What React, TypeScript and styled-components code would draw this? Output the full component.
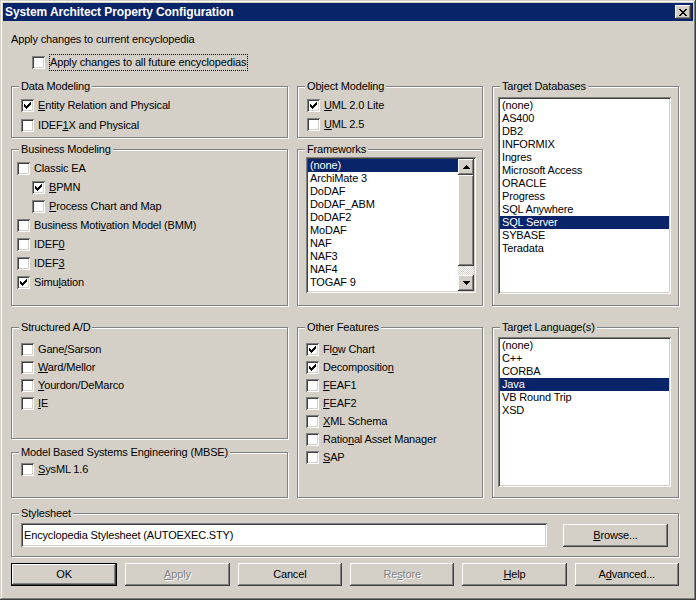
import React from "react";
import styled, { createGlobalStyle, css } from "styled-components";

const face = "#d4d0c8";
const shadow = "#808080";
const darkShadow = "#404040";
const selection = "#0a246a";

const GlobalStyle = createGlobalStyle`
  html, body {
    margin: 0;
    padding: 0;
    background: ${face};
  }
  body {
    font-family: "Liberation Sans", Arial, sans-serif;
    font-size: 11px;
    letter-spacing: -0.15px;
    color: #000;
  }
  * {
    box-sizing: border-box;
  }
`;

const raised = css`
  box-shadow: inset -1px -1px ${darkShadow}, inset 1px 1px #fff,
    inset -2px -2px ${shadow}, inset 2px 2px ${face};
`;

const sunken = css`
  box-shadow: inset 1px 1px ${shadow}, inset -1px -1px #fff,
    inset 2px 2px ${darkShadow}, inset -2px -2px ${face};
`;

const Window = styled.div`
  width: 696px;
  height: 600px;
  padding: 3px;
  background: ${face};
  box-shadow: inset -1px -1px ${darkShadow}, inset 1px 1px ${face},
    inset -2px -2px ${shadow}, inset 2px 2px #fff;
  display: flex;
  flex-direction: column;
`;

const TitleBar = styled.div`
  height: 18px;
  background: ${selection};
  display: flex;
  align-items: center;
  justify-content: space-between;
  padding: 0 2px;
`;

const TitleText = styled.span`
  color: #fff;
  font-weight: bold;
  font-size: 12px;
  letter-spacing: -0.1px;
  line-height: 14px;
  white-space: nowrap;
`;

const CloseButton = styled.div`
  width: 16px;
  height: 14px;
  background: ${face};
  ${raised};
  display: flex;
  align-items: center;
  justify-content: center;
`;

const Body = styled.div`
  padding-left: 8px;
  display: flex;
  flex-direction: column;
`;

const Intro = styled.div`
  margin-top: 12px;
  line-height: 13px;
  white-space: nowrap;
`;

const FutureRow = styled.div`
  margin-top: 8px;
  height: 17px;
  padding-left: 21px;
  display: flex;
  align-items: center;
  gap: 4px;
`;

const FocusLabel = styled.span`
  border: 1px dotted #000;
  line-height: 13px;
  padding: 1px 1px 1px 0;
  white-space: nowrap;
`;

const UpperGrid = styled.div`
  margin-top: 15px;
  display: grid;
  grid-template-columns: 277px 186px 187px;
  grid-template-rows: 52px 157px;
  column-gap: 9px;
  row-gap: 11px;
  grid-template-areas:
    "data obj db"
    "bus fw db";
`;

const LowerGrid = styled.div`
  margin-top: 21px;
  display: grid;
  grid-template-columns: 277px 186px 187px;
  grid-template-rows: 112px 46px;
  column-gap: 9px;
  row-gap: 13px;
  grid-template-areas:
    "sad other lang"
    "mbse other lang";
`;

const Group = styled.div<{ $area?: string; $pad: string }>`
  grid-area: ${(p) => p.$area ?? "auto"};
  position: relative;
  border: 1px solid ${shadow};
  box-shadow: 1px 1px 0 #fff, inset 1px 1px 0 #fff;
  padding: ${(p) => p.$pad};
  display: flex;
  flex-direction: column;
`;

const Caption = styled.span`
  position: absolute;
  top: -7px;
  left: 7px;
  padding: 0 2px;
  line-height: 13px;
  background: ${face};
  white-space: nowrap;
`;

const CheckRow = styled.div<{ $h: number; $indent?: number }>`
  height: ${(p) => p.$h}px;
  padding-left: ${(p) => p.$indent ?? 0}px;
  display: flex;
  align-items: center;
  gap: 4px;
  flex: none;
`;

const Box = styled.span`
  width: 13px;
  height: 13px;
  flex: none;
  background: #fff;
  ${sunken};
  display: flex;
  align-items: center;
  justify-content: center;
`;

const LabelText = styled.span<{ $disabled?: boolean }>`
  line-height: 13px;
  white-space: nowrap;
  ${(p) =>
    p.$disabled &&
    css`
      color: ${shadow};
      text-shadow: 1px 1px 0 #fff;
    `}
`;

const Key = styled.u`
  text-decoration: underline;
  text-underline-offset: 1px;
`;

const ListBox = styled.div`
  flex: 1;
  background: #fff;
  ${sunken};
  padding: 2px;
  display: flex;
  overflow: hidden;
`;

const ListItems = styled.div`
  flex: 1;
  overflow: hidden;
`;

const ListItem = styled.div<{ $selected?: boolean }>`
  height: 13px;
  line-height: 13px;
  padding-left: 2px;
  white-space: nowrap;
  background: ${(p) => (p.$selected ? selection : "transparent")};
  color: ${(p) => (p.$selected ? "#fff" : "#000")};
`;

const ScrollBar = styled.div`
  width: 16px;
  flex: none;
  display: flex;
  flex-direction: column;
`;

const ScrollButton = styled.div`
  height: 16px;
  flex: none;
  background: ${face};
  ${raised};
  display: flex;
  align-items: center;
  justify-content: center;
`;

const Thumb = styled.div`
  height: 91px;
  flex: none;
  background: ${face};
  ${raised};
`;

const Track = styled.div`
  flex: 1;
  background: repeating-conic-gradient(#fff 0 25%, ${face} 0 50%) 0 0 / 2px
    2px;
`;

const StyleGroup = styled(Group)`
  margin-top: 15px;
  width: 668px;
  height: 44px;
  flex-direction: row;
  align-items: center;
  gap: 16px;
`;

const TextField = styled.div`
  width: 526px;
  height: 24px;
  background: #fff;
  ${sunken};
  padding: 0 3px;
  display: flex;
  align-items: center;
  white-space: nowrap;
`;

const Button = styled.div<{ $default?: boolean; $width?: number }>`
  height: 23px;
  flex: ${(p) => (p.$width ? "none" : "1")};
  width: ${(p) => (p.$width ? `${p.$width}px` : "auto")};
  background: ${face};
  ${raised};
  display: flex;
  align-items: center;
  justify-content: center;
  line-height: 13px;
  white-space: nowrap;
  ${(p) =>
    p.$default &&
    css`
      border: 1px solid #000;
    `}
`;

const ButtonRow = styled.div`
  margin-top: 6px;
  width: 668px;
  display: flex;
  gap: 8px;
`;

// "&" marks the mnemonic letter, as in a Windows resource file
const Mnemonic = ({ text }: { text: string }) => {
  const i = text.indexOf("&");
  if (i < 0) return <>{text}</>;
  return (
    <>
      {text.slice(0, i)}
      <Key>{text[i + 1]}</Key>
      {text.slice(i + 2)}
    </>
  );
};

const CheckMark = () => (
  <svg width="7" height="7" viewBox="0 0 7 7" shapeRendering="crispEdges">
    <path
      d="M6 0h1v1h-1z M5 1h2v1h-2z M0 2h1v1h-1z M4 2h3v1h-3z M0 3h2v1h-2z M3 3h3v1h-3z M0 4h5v1h-5z M1 5h3v1h-3z M2 6h1v1h-1z"
      fill="#000"
    />
  </svg>
);

const Arrow = ({ down }: { down?: boolean }) => (
  <svg
    width="7"
    height="4"
    viewBox="0 0 7 4"
    shapeRendering="crispEdges"
    style={down ? { transform: "scaleY(-1)" } : undefined}
  >
    <path d="M3 0h1v1h1v1h1v1h1v1h-7v-1h1v-1h1v-1h1z" fill="#000" />
  </svg>
);

const CloseGlyph = () => (
  <svg width="8" height="7" viewBox="0 0 8 7" shapeRendering="crispEdges">
    <path
      d="M0 0h2v1h-2z M6 0h2v1h-2z M1 1h2v1h-2z M5 1h2v1h-2z M2 2h4v1h-4z M3 3h2v1h-2z M2 4h4v1h-4z M1 5h2v1h-2z M5 5h2v1h-2z M0 6h2v1h-2z M6 6h2v1h-2z"
      fill="#000"
    />
  </svg>
);

type Option = { label: string; checked?: boolean; indent?: number };

const Check = ({ label, checked, indent, h }: Option & { h: number }) => (
  <CheckRow $h={h} $indent={indent}>
    <Box>{checked && <CheckMark />}</Box>
    <LabelText>
      <Mnemonic text={label} />
    </LabelText>
  </CheckRow>
);

const dataModeling: Option[] = [
  { label: "&Entity Relation and Physical", checked: true },
  { label: "IDEF&1X and Physical" },
];

const objectModeling: Option[] = [
  { label: "&UML 2.0 Lite", checked: true },
  { label: "&UML 2.5" },
];

const businessModeling: Option[] = [
  { label: "Classic EA" },
  { label: "&BPMN", checked: true, indent: 15 },
  { label: "&Process Chart and Map", indent: 15 },
  { label: "Business Moti&vation Model (BMM)" },
  { label: "IDEF&0" },
  { label: "IDEF&3" },
  { label: "Simu&lation", checked: true },
];

const structured: Option[] = [
  { label: "Gane&/Sarson" },
  { label: "&Ward/Mellor" },
  { label: "&Yourdon/DeMarco" },
  { label: "&IE" },
];

const otherFeatures: Option[] = [
  { label: "Fl&ow Chart", checked: true },
  { label: "Decompositio&n", checked: true },
  { label: "&FEAF1" },
  { label: "&FEAF2" },
  { label: "&XML Schema" },
  { label: "Ratio&nal Asset Manager" },
  { label: "&SAP" },
];

const frameworks = [
  "(none)",
  "ArchiMate 3",
  "DoDAF",
  "DoDAF_ABM",
  "DoDAF2",
  "MoDAF",
  "NAF",
  "NAF3",
  "NAF4",
  "TOGAF 9",
  "UAF",
];

const databases = [
  "(none)",
  "AS400",
  "DB2",
  "INFORMIX",
  "Ingres",
  "Microsoft Access",
  "ORACLE",
  "Progress",
  "SQL Anywhere",
  "SQL Server",
  "SYBASE",
  "Teradata",
];

const languages = ["(none)", "C++", "CORBA", "Java", "VB Round Trip", "XSD"];

const buttons = [
  { label: "OK", isDefault: true },
  { label: "&Apply", disabled: true },
  { label: "Cancel" },
  { label: "Re&store", disabled: true },
  { label: "&Help" },
  { label: "A&dvanced..." },
];

const App = () => {
  return (
    <>
      <GlobalStyle />
      <Window>
        <TitleBar>
          <TitleText>System Architect Property Configuration</TitleText>
          <CloseButton>
            <CloseGlyph />
          </CloseButton>
        </TitleBar>
        <Body>
          <Intro>Apply changes to current encyclopedia</Intro>
          <FutureRow>
            <Box />
            <FocusLabel>Apply changes to all future encyclopedias</FocusLabel>
          </FutureRow>

          <UpperGrid>
            <Group $area="data" $pad="8px 0 0 9px">
              <Caption>Data Modeling</Caption>
              {dataModeling.map((o) => (
                <Check key={o.label} {...o} h={20} />
              ))}
            </Group>
            <Group $area="obj" $pad="9px 0 0 9px">
              <Caption>Object Modeling</Caption>
              {objectModeling.map((o, i) => (
                <Check key={i} {...o} h={19} />
              ))}
            </Group>
            <Group $area="db" $pad="10px 7px 11px 5px">
              <Caption>Target Databases</Caption>
              <ListBox>
                <ListItems>
                  {databases.map((d) => (
                    <ListItem key={d} $selected={d === "SQL Server"}>
                      {d}
                    </ListItem>
                  ))}
                </ListItems>
              </ListBox>
            </Group>
            <Group $area="bus" $pad="9px 0 0 5px">
              <Caption>Business Modeling</Caption>
              {businessModeling.map((o) => (
                <Check key={o.label} {...o} h={19} />
              ))}
            </Group>
            <Group $area="fw" $pad="7px 6px 12px 8px">
              <Caption>Frameworks</Caption>
              <ListBox>
                <ListItems>
                  {frameworks.map((f) => (
                    <ListItem key={f} $selected={f === "(none)"}>
                      {f}
                    </ListItem>
                  ))}
                </ListItems>
                <ScrollBar>
                  <ScrollButton>
                    <Arrow />
                  </ScrollButton>
                  <Thumb />
                  <Track />
                  <ScrollButton>
                    <Arrow down />
                  </ScrollButton>
                </ScrollBar>
              </ListBox>
            </Group>
          </UpperGrid>

          <LowerGrid>
            <Group $area="sad" $pad="12px 0 0 9px">
              <Caption>Structured A/D</Caption>
              {structured.map((o) => (
                <Check key={o.label} {...o} h={18} />
              ))}
            </Group>
            <Group $area="mbse" $pad="7px 0 0 9px">
              <Caption>Model Based Systems Engineering (MBSE)</Caption>
              <Check label="&SysML 1.6" h={18} />
            </Group>
            <Group $area="other" $pad="12px 0 0 8px">
              <Caption>Other Features</Caption>
              {otherFeatures.map((o) => (
                <Check key={o.label} {...o} h={18} />
              ))}
            </Group>
            <Group $area="lang" $pad="9px 7px 10px 5px">
              <Caption>Target Language(s)</Caption>
              <ListBox>
                <ListItems>
                  {languages.map((l) => (
                    <ListItem key={l} $selected={l === "Java"}>
                      {l}
                    </ListItem>
                  ))}
                </ListItems>
              </ListBox>
            </Group>
          </LowerGrid>

          <StyleGroup $pad="0 0 0 9px">
            <Caption>Stylesheet</Caption>
            <TextField>Encyclopedia Stylesheet (AUTOEXEC.STY)</TextField>
            <Button $width={105}>
              <LabelText>
                <Mnemonic text="&Browse..." />
              </LabelText>
            </Button>
          </StyleGroup>

          <ButtonRow>
            {buttons.map((b) => (
              <Button key={b.label} $default={b.isDefault}>
                <LabelText $disabled={b.disabled}>
                  <Mnemonic text={b.label} />
                </LabelText>
              </Button>
            ))}
          </ButtonRow>
        </Body>
      </Window>
    </>
  );
};

export default App;
